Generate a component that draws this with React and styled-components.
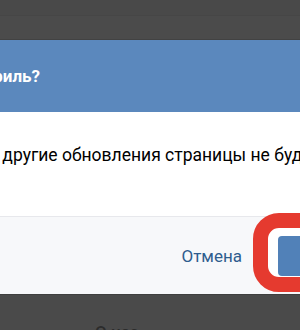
import React from "react";
import styled, { createGlobalStyle } from "styled-components";

const Global = createGlobalStyle`
  html, body { margin: 0; padding: 0; }
  body {
    background: #4a4a4a;
    font-family: Roboto, "Noto Sans", "Liberation Sans", sans-serif;
    overflow: hidden;
  }
`;

const Page = styled.div`
  width: 300px;
  height: 330px;
  overflow: hidden;
  background: #4a4a4a;
  display: flex;
  flex-direction: column;
`;

const TopBar = styled.div`
  height: 15px;
  background: #494949;
  border-bottom: 1px solid #464646;
  flex: none;
`;

const SubBar = styled.div`
  height: 23px;
  background: #4b4b4b;
  border-bottom: 1px solid #424242;
  flex: none;
`;

const Dialog = styled.div`
  flex: none;
  width: ${(p) => p.$width}px;
  margin-left: -${(p) => p.$shift}px;
  display: flex;
  flex-direction: column;
`;

const Header = styled.div`
  height: 72px;
  background: #5b88bd;
  padding: 0 19px;
  display: flex;
  align-items: center;
`;

const Title = styled.h2`
  margin: 0;
  color: #ffffff;
  font-size: 17px;
  font-weight: 700;
  white-space: nowrap;
`;

const Body = styled.div`
  height: 105px;
  background: #ffffff;
  padding: 33px 25px 0 21px;
  box-sizing: border-box;
  border-bottom: 1px solid #e7e8ec;
`;

const Text = styled.p`
  margin: 0;
  color: #000000;
  font-size: 17.5px;
  line-height: 20px;
  white-space: nowrap;
`;

const Footer = styled.div`
  height: 77px;
  background: #f7f8fa;
  padding: 0 20px;
  display: flex;
  align-items: center;
  justify-content: flex-end;
  gap: 36px;
  border-bottom: 1px solid #3f3f3f;
`;

const LinkButton = styled.button`
  border: none;
  background: none;
  padding: 0;
  color: #2f5d8e;
  font-family: inherit;
  font-size: 17px;
  cursor: pointer;
`;

const Highlight = styled.div`
  position: relative;
  display: flex;
`;

const Ring = styled.span`
  position: absolute;
  top: -23px;
  bottom: -16px;
  left: -25px;
  right: -25px;
  border: 15px solid #e53a2f;
  border-radius: 26px;
  background: #ffffff;
`;

const PrimaryButton = styled.button`
  position: relative;
  height: 40px;
  width: 116px;
  border: none;
  border-radius: 4px;
  background: #5181b8;
  color: #ffffff;
  font-family: inherit;
  font-size: 17px;
`;

const Below = styled.div`
  flex: 1;
  padding: 27px 0 0 95px;
`;

const BelowText = styled.span`
  color: #2c2c2c;
  font-size: 17px;
  font-weight: 500;
`;

export default function App() {
  return (
    <>
      <Global />
      <Page>
        <TopBar />
        <SubBar />
        <Dialog $shift={129} $width={543}>
          <Header>
            <Title>Удалить профиль?</Title>
          </Header>
          <Body>
            <Text>Все записи и другие обновления страницы не будут видны.</Text>
          </Body>
          <Footer>
            <LinkButton>Отмена</LinkButton>
            <Highlight>
              <Ring />
              <PrimaryButton>Удалить</PrimaryButton>
            </Highlight>
          </Footer>
        </Dialog>
        <Below>
          <BelowText>О нас</BelowText>
        </Below>
      </Page>
    </>
  );
}
